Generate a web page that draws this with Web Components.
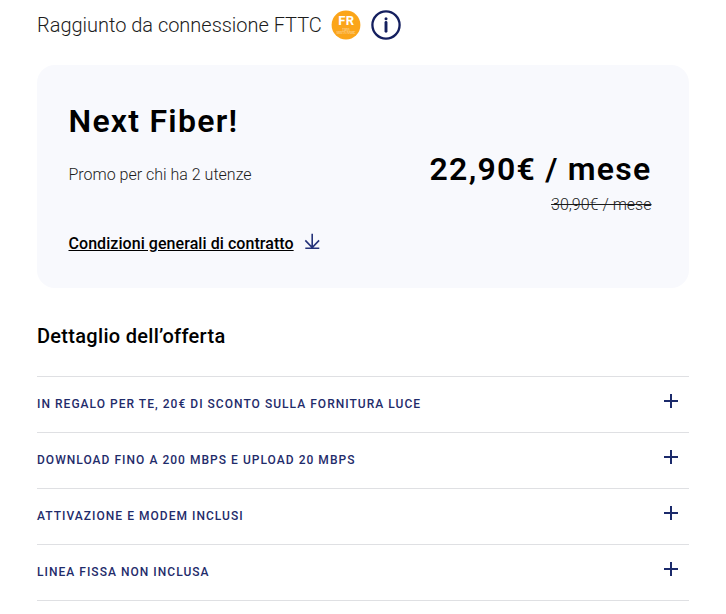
<!DOCTYPE html>
<html lang="it">
<head>
<meta charset="utf-8">
<title>Next Fiber</title>
<style>
body {
  margin: 0;
  background: #fff;
  font-family: Roboto, "Liberation Sans", sans-serif;
  color: #000;
}
</style>
</head>
<body>
<offer-page>
  <connection-status slot="status">Raggiunto da connessione FTTC</connection-status>
  <offer-card slot="card">
    <span slot="name">Next Fiber!</span>
    <span slot="promo">Promo per chi ha 2 utenze</span>
    <span slot="terms">Condizioni generali di contratto</span>
    <span slot="price">22,90€ / mese</span>
    <span slot="old-price">30,90€ / mese</span>
  </offer-card>
  <span slot="title">Dettaglio dell’offerta</span>
  <offer-detail>In regalo per te, 20€ di sconto sulla fornitura luce</offer-detail>
  <offer-detail>Download fino a 200 Mbps e upload 20 Mbps</offer-detail>
  <offer-detail>Attivazione e modem inclusi</offer-detail>
  <offer-detail>Linea fissa non inclusa</offer-detail>
</offer-page>

<script>
function createTemplate(html) {
  const template = document.createElement('template');
  template.innerHTML = html;
  return template;
}

const pageTemplate = createTemplate(`
<style>
:host {
  display: block;
  padding: 9px 37px 0;
}

h2 {
  margin: 34px 0 0;
  font-size: 20px;
  font-weight: 480;
  line-height: 28px;
  letter-spacing: 0.3px;
}

.details {
  margin-top: 26px;
  border-top: 1px solid #dfe0e3;
}
</style>
<slot name="status"></slot>
<slot name="card"></slot>
<h2><slot name="title"></slot></h2>
<div class="details"><slot></slot></div>
`);

const statusTemplate = createTemplate(`
<style>
:host {
  display: flex;
  align-items: center;
  height: 32px;
  font-size: 20px;
  font-weight: 300;
  white-space: nowrap;
}

.label {
  width: 294px;
  color: #1c1c1c;
  letter-spacing: -0.02px;
}

svg {
  display: block;
  flex: none;
}

.info {
  margin-left: 9px;
}
</style>
<span class="label"><slot></slot></span>
<svg class="badge" width="30" height="32" viewBox="0 0 30 32">
  <circle cx="15" cy="16" r="14.4" fill="#fba51a"/>
  <text x="15.3" y="15.6" text-anchor="middle" font-size="13" font-weight="700" fill="#fff" letter-spacing="0.3">FR</text>
  <text x="15" y="21.8" text-anchor="middle" font-size="2.8" fill="#fff" opacity="0.8">FIBRA</text>
  <text x="15" y="25.4" text-anchor="middle" font-size="3.2" fill="#fff" opacity="0.8">MISTA RAME</text>
</svg>
<svg class="info" width="32" height="32" viewBox="0 0 32 32">
  <circle cx="16" cy="16" r="13.6" fill="none" stroke="#141f5f" stroke-width="2.3"/>
  <circle cx="16" cy="9.8" r="1.5" fill="#141f5f"/>
  <path d="M16 13.5V22.3" stroke="#141f5f" stroke-width="2.9" stroke-linecap="round"/>
</svg>
`);

const cardTemplate = createTemplate(`
<style>
:host {
  display: grid;
  grid-template-columns: 1fr auto;
  margin-top: 24px;
  height: 223px;
  box-sizing: border-box;
  padding: 36px 37.5px 0 31.5px;
  border-radius: 18px;
  background: #f8f9fd;
}

.name {
  font-size: 32px;
  font-weight: 650;
  line-height: 40px;
  letter-spacing: 1.25px;
}

.promo {
  margin-top: 22px;
  color: #1c1c1c;
  font-size: 16px;
  font-weight: 300;
  line-height: 24px;
}

.terms {
  display: flex;
  align-items: center;
  margin-top: 45px;
  font-size: 16px;
  font-weight: 500;
  line-height: 24px;
  letter-spacing: 0.06px;
}

a {
  color: #000;
  text-decoration: underline;
}

.terms svg {
  margin: -6px 0 0 10px;
}

.prices {
  margin-top: 48px;
  text-align: right;
}

.price {
  font-size: 32px;
  font-weight: 650;
  line-height: 40px;
  letter-spacing: 1.25px;
}

.old-price {
  color: #1c1c1c;
  font-size: 16px;
  font-weight: 300;
  line-height: 24px;
  margin-top: 4px;
  text-decoration: line-through;
}
</style>
<div>
  <div class="name"><slot name="name"></slot></div>
  <div class="promo"><slot name="promo"></slot></div>
  <div class="terms">
    <a><slot name="terms"></slot></a>
    <svg width="17" height="17" viewBox="0 0 17 17" fill="none" stroke="#25337a" stroke-width="1.6">
      <path d="M8.2 0.8V15M1.3 7.4L8.2 14.6L15.1 7.4M1.3 15.3H15.3"/>
    </svg>
  </div>
</div>
<div class="prices">
  <div class="price"><slot name="price"></slot></div>
  <div class="old-price"><slot name="old-price"></slot></div>
</div>
`);

const detailTemplate = createTemplate(`
<style>
:host {
  display: flex;
  align-items: center;
  justify-content: space-between;
  box-sizing: border-box;
  height: 56px;
  padding: 0 11px 2px 0;
  border-bottom: 1px solid #dfe0e3;
  color: #1f2c6b;
  font-size: 12px;
  font-weight: 500;
  letter-spacing: 1.03px;
  text-transform: uppercase;
}

svg {
  margin-top: -5px;
}
</style>
<span><slot></slot></span>
<svg width="14" height="14" viewBox="0 0 14 14" stroke="#1b2a6b" stroke-width="2">
  <path d="M7 0V14M0 7H14"/>
</svg>
`);

function defineElement(name, template) {
  customElements.define(name, class extends HTMLElement {
    constructor() {
      super();

      this.attachShadow({ mode: 'open' });
      this.shadowRoot.appendChild(template.content.cloneNode(true));
    }
  });
}

defineElement('offer-page', pageTemplate);
defineElement('connection-status', statusTemplate);
defineElement('offer-card', cardTemplate);
defineElement('offer-detail', detailTemplate);
</script>
</body>
</html>
